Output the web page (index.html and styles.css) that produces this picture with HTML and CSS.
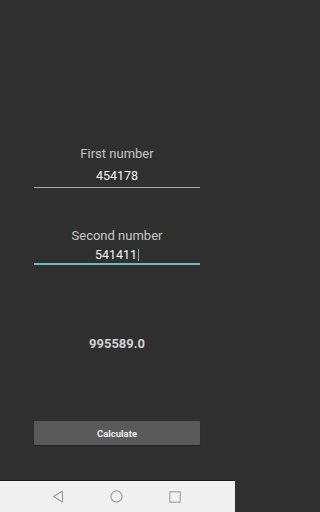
FILE: index.html
```html
<!DOCTYPE html>
<html>
<head>
<meta charset="utf-8">
<link rel="stylesheet" href="styles.css">
</head>
<body>
<div class="screen">
  <main class="app">
    <div class="field">
      <div class="label">First number</div>
      <div class="value">454178</div>
    </div>
    <div class="field field-second">
      <div class="label">Second number</div>
      <div class="value value-focused">541411<span class="cursor"></span></div>
    </div>
    <div class="result">995589.0</div>
    <div class="button">Calculate</div>
  </main>
  <nav class="navbar">
    <svg class="nav-icon" width="12" height="13" viewBox="0 0 12 13"><path d="M10.5 1 L1.5 6.5 L10.5 12 Z" fill="none" stroke="#9a9a9a" stroke-width="1.1" stroke-linejoin="round"/></svg>
    <svg class="nav-icon" width="13" height="13" viewBox="0 0 13 13"><circle cx="6.5" cy="6.5" r="5.6" fill="none" stroke="#9a9a9a" stroke-width="1.1"/></svg>
    <svg class="nav-icon" width="12" height="12" viewBox="0 0 12 12"><rect x="0.8" y="0.8" width="10.4" height="10.4" fill="none" stroke="#9a9a9a" stroke-width="1.1"/></svg>
  </nav>
</div>
</body>
</html>
```
FILE: styles.css
```css
html, body {
  margin: 0;
  padding: 0;
}
body {
  font-family: Roboto, "Liberation Sans", sans-serif;
  background: #303030;
}
.screen {
  width: 235px;
  height: 512px;
  display: flex;
  flex-direction: column;
}
.app {
  height: 480px;
  background: #303030;
  display: flex;
  flex-direction: column;
  padding: 146px 35px 0 34px;
  box-sizing: border-box;
}
.field {
  display: flex;
  flex-direction: column;
  align-items: stretch;
}
.label {
  font-size: 13px;
  line-height: 16px;
  color: #c6c6c6;
  text-align: center;
}
.value {
  font-size: 12.5px;
  line-height: 16px;
  color: #f4f4f4;
  text-align: center;
  font-weight: 400;
  margin-top: 6px;
  padding-bottom: 3px;
  border-bottom: 1px solid #a8a8a8;
}
.field-second {
  margin-top: 40px;
}
.field-second .value {
  margin-top: 3px;
  padding-bottom: 0;
  border-bottom: 2px solid #72bdb3;
}
.cursor {
  display: inline-block;
  width: 1px;
  height: 12px;
  background: #72bdb3;
  margin-left: 1px;
  vertical-align: -2px;
}
.result {
  margin-top: 71px;
  font-size: 13px;
  line-height: 16px;
  font-weight: bold;
  color: #d2d2d2;
  text-align: center;
}
.button {
  margin-top: 69px;
  height: 24px;
  background: #5a5a5a;
  border-radius: 1px;
  box-shadow: 0 1px 1px rgba(0,0,0,0.35);
  color: #ececec;
  font-size: 9.5px;
  font-weight: bold;
  display: flex;
  align-items: center;
  justify-content: center;
}
.navbar {
  height: 32px;
  background: #f0f0f0;
  border-top: 1px solid #1a1a1a;
  box-sizing: border-box;
  display: flex;
  align-items: center;
  padding: 0 0 0 52px;
  gap: 46px;
}
.nav-icon {
  display: block;
}
```
